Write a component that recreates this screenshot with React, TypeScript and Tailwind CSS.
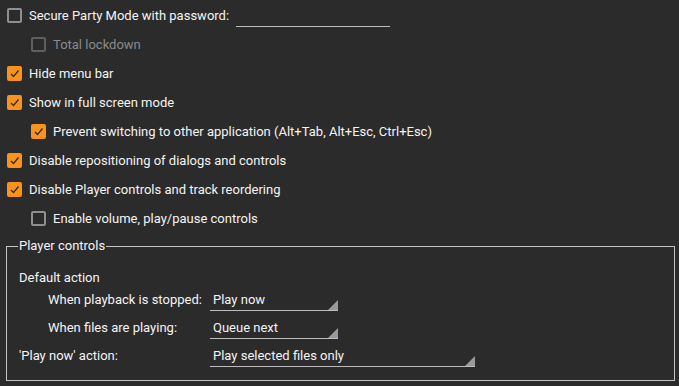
import React from 'react';

type CheckProps = {
  checked?: boolean;
  disabled?: boolean;
};

const CheckBox: React.FC<CheckProps> = ({checked, disabled}) => {
  if (checked) {
    return (
      <div className="flex h-[15px] w-[15px] shrink-0 items-center justify-center rounded-[2px] bg-[#f7931e]">
        <svg width="11" height="11" viewBox="0 0 11 11">
          <polyline points="2,6 4.5,8.5 9.5,2.5" fill="none" stroke="#3a2a10" strokeWidth="1.3" />
        </svg>
      </div>
    );
  }
  return (
    <div
      className={
        disabled
          ? 'h-[15px] w-[15px] shrink-0 rounded-[2px] border-2 border-[#5f5f5f]'
          : 'h-[15px] w-[15px] shrink-0 rounded-[2px] border-2 border-[#8f8f8f]'
      }
    />
  );
};

type RowProps = {
  checked?: boolean;
  disabled?: boolean;
  indent?: boolean;
  label: string;
  children?: React.ReactNode;
};

const Row: React.FC<RowProps> = ({checked, disabled, indent, label, children}) => (
  <div className={indent ? 'flex h-[29px] items-center pl-[24px]' : 'flex h-[29px] items-center'}>
    <CheckBox checked={checked} disabled={disabled} />
    <span className={disabled ? 'ml-[7px] text-[#8a8a8a]' : 'ml-[7px] text-[#f4f4f4]'}>{label}</span>
    {children}
  </div>
);

const Combo: React.FC<{value: string; width: string}> = ({value, width}) => (
  <div className={`relative h-[21px] shrink-0 border-b border-[#bdbdbd] pl-[3px] leading-[20px] ${width}`}>
    {value}
    <svg className="absolute right-0 bottom-0" width="10" height="10" viewBox="0 0 10 10">
      <polygon points="10,0 10,10 0,10" fill="#9a9a9a" />
    </svg>
  </div>
);

export default function App() {
  return (
    <div
      className="h-[386px] w-[679px] overflow-hidden bg-[#2b2b2b] pt-[1px] pl-[7px] text-[13px] text-[#f4f4f4]"
      style={{fontFamily: 'Roboto, "Liberation Sans", sans-serif'}}
    >
      <Row label="Secure Party Mode with password:">
        <div className="mt-[3px] ml-[7px] h-[19px] w-[154px] border-b border-[#bdbdbd]" />
      </Row>
      <Row indent disabled label="Total lockdown" />
      <Row checked label="Hide menu bar" />
      <Row checked label="Show in full screen mode" />
      <Row indent checked label="Prevent switching to other application (Alt+Tab, Alt+Esc, Ctrl+Esc)" />
      <Row checked label="Disable repositioning of dialogs and controls" />
      <Row checked label="Disable Player controls and track reordering" />
      <Row indent label="Enable volume, play/pause controls" />

      <fieldset className="mt-[5px] mr-[4px] -ml-[1px] border border-[#c4c4c4] pr-[12px] pb-[13px] pl-[12px]">
        <legend className="-ml-[1px] px-[1px] leading-[16px]">Player controls</legend>
        <div className="mt-[14px] leading-[20px]">Default action</div>
        <div className="mt-[2px] flex leading-[20px]">
          <span className="w-[191px] shrink-0 pl-[29px] whitespace-nowrap">When playback is stopped:</span>
          <Combo value="Play now" width="w-[128px]" />
        </div>
        <div className="mt-[7px] flex leading-[20px]">
          <span className="w-[191px] shrink-0 pl-[29px] whitespace-nowrap">When files are playing:</span>
          <Combo value="Queue next" width="w-[128px]" />
        </div>
        <div className="mt-[7px] flex leading-[20px]">
          <span className="w-[191px] shrink-0 whitespace-nowrap">'Play now' action:</span>
          <Combo value="Play selected files only" width="w-[265px]" />
        </div>
      </fieldset>
    </div>
  );
}
